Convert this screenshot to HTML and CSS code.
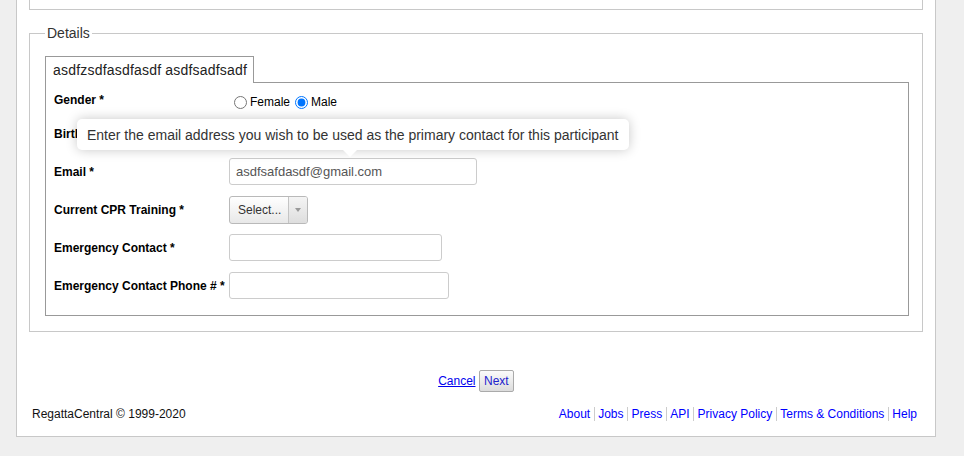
FILE: index.html
```html
<!DOCTYPE html>
<html>
<head>
<meta charset="utf-8">
<title>Details</title>
<link rel="stylesheet" href="styles.css">
</head>
<body>
<div class="page">
  <div class="prev-section"></div>

  <fieldset class="details">
    <legend>Details</legend>
    <div class="tabs">
      <div class="tab">asdfzsdfasdfasdf asdfsadfsadf</div>
      <div class="tab-filler"></div>
    </div>
    <div class="panel">
      <div class="row row-gender">
        <div class="label">Gender *</div>
        <div class="value radios">
          <input type="radio" name="g" id="gf"><label for="gf">Female</label>
          <input type="radio" name="g" id="gm" checked><label for="gm">Male</label>
        </div>
      </div>
      <div class="row">
        <div class="label">Birthdate *</div>
        <div class="value"><input class="text w-birth" type="text"></div>
      </div>
      <div class="row">
        <div class="label">Email *</div>
        <div class="value anchor">
          <input class="text w-email" type="text" value="asdfsafdasdf@gmail.com">
          <div class="tooltip">Enter the email address you wish to be used as the primary contact for this participant<span class="tip-arrow"></span></div>
        </div>
      </div>
      <div class="row row-select">
        <div class="label">Current CPR Training *</div>
        <div class="value">
          <div class="select"><span class="select-text">Select...</span><span class="select-btn"><span class="caret"></span></span></div>
        </div>
      </div>
      <div class="row">
        <div class="label">Emergency Contact *</div>
        <div class="value"><input class="text w-ec" type="text"></div>
      </div>
      <div class="row last">
        <div class="label">Emergency Contact Phone # *</div>
        <div class="value"><input class="text w-phone" type="text"></div>
      </div>
    </div>
  </fieldset>

  <div class="actions">
    <a href="#" class="cancel">Cancel</a> <button class="next">Next</button>
  </div>

  <div class="footer">
    <div class="copy">RegattaCentral © 1999-2020</div>
    <div class="links">
      <a href="#">About</a><a href="#">Jobs</a><a href="#">Press</a><a href="#">API</a><a href="#">Privacy Policy</a><a href="#">Terms &amp; Conditions</a><a href="#">Help</a>
    </div>
  </div>
</div>
</body>
</html>
```

FILE: styles.css
```css
html, body {
  margin: 0;
  padding: 0;
}
body {
  background: #efefef;
  font-family: Arial, "Liberation Sans", Helvetica, sans-serif;
  font-size: 12px;
  color: #000;
}
.page {
  box-sizing: border-box;
  width: 920px;
  margin-left: 16px;
  background: #fff;
  border: 1px solid #c8c8c8;
  border-top: none;
  padding-bottom: 14px;
}
.prev-section {
  box-sizing: border-box;
  height: 10px;
  margin: 0 12px;
  border: 1px solid #c8c8c8;
  border-top: none;
}
.details {
  margin: 15px 12px 0;
  padding: 15px 13px 15px 15px;
  border: 1px solid #c8c8c8;
  min-width: 0;
}
.details legend {
  padding: 0 2px;
  font-size: 14px;
  line-height: 16px;
  color: #333;
}
.tabs {
  display: flex;
}
.tab {
  box-sizing: border-box;
  height: 27px;
  border: 1px solid #999;
  border-bottom: none;
  padding: 0 6px 0 7px;
  font-size: 14px;
  letter-spacing: 0.2px;
  line-height: 26px;
  color: #222;
  background: #fff;
}
.tab-filler {
  flex: 1;
  box-sizing: border-box;
  height: 27px;
  border-bottom: 1px solid #999;
}
.panel {
  border: 1px solid #999;
  border-top: none;
  padding: 7px 0 16px 8px;
}
.row {
  display: grid;
  grid-template-columns: 175px auto;
  align-items: center;
  min-height: 27px;
  margin-bottom: 11px;
}
.row.last {
  margin-bottom: 0;
}
.row-select {
  margin-bottom: 10px;
}
.row-gender {
  min-height: 20px;
  height: 20px;
  margin-bottom: 10px;
}
.label {
  font-weight: bold;
  font-size: 12px;
}
.value {
  display: flex;
  align-items: center;
}
.radios input {
  margin: 4px 3px 0 5px;
  width: 13px;
  height: 13px;
}
.radios label {
  font-size: 12px;
  margin-top: 4px;
}
.text {
  box-sizing: border-box;
  height: 27px;
  border: 1px solid #ccc;
  border-radius: 3px;
  padding: 0 6px;
  font-family: Arial, "Liberation Sans", sans-serif;
  font-size: 13px;
  color: #555;
  margin: 0;
}
.w-birth { width: 130px; }
.w-email { width: 248px; }
.w-ec { width: 213px; }
.w-phone { width: 220px; }

.anchor {
  position: relative;
}
.tooltip {
  position: absolute;
  left: -152px;
  top: -39px;
  box-sizing: border-box;
  width: 552px;
  height: 31px;
  padding: 0 10px;
  background: #fff;
  border-radius: 5px;
  box-shadow: 0 0 12px rgba(0, 0, 0, 0.22);
  font-size: 14px;
  line-height: 32px;
  color: #333;
  white-space: nowrap;
  z-index: 5;
}
.tip-arrow {
  position: absolute;
  left: 266px;
  top: 31px;
  width: 0;
  height: 0;
  border-left: 7px solid transparent;
  border-right: 7px solid transparent;
  border-top: 7px solid #fff;
}

.select {
  box-sizing: border-box;
  display: flex;
  width: 79px;
  height: 28px;
  border: 1px solid #b9b9b9;
  border-radius: 3px;
  background: linear-gradient(#fff, #e8e8e8);
}
.select-text {
  flex: 1;
  padding-left: 8px;
  font-size: 12px;
  line-height: 26px;
  color: #333;
}
.select-btn {
  width: 18px;
  border-left: 1px solid #c4c4c4;
  display: flex;
  align-items: center;
  justify-content: center;
  background: linear-gradient(#f4f4f4, #dedede);
  border-radius: 0 2px 2px 0;
}
.caret {
  width: 0;
  height: 0;
  border-left: 3px solid transparent;
  border-right: 3px solid transparent;
  border-top: 4px solid #999;
}

.actions {
  margin-top: 38px;
  text-align: center;
  height: 22px;
  line-height: 22px;
}
.cancel {
  color: #00e;
  font-size: 12px;
  text-decoration: underline;
}
.next {
  box-sizing: border-box;
  height: 22px;
  width: 35px;
  padding: 0;
  margin: 0;
  vertical-align: top;
  border: 1px solid #aaa;
  border-radius: 2px;
  background: linear-gradient(#fbfbfb, #dcdcdc);
  font-family: Arial, "Liberation Sans", sans-serif;
  font-size: 12px;
  color: #22c;
}
.footer {
  display: flex;
  justify-content: space-between;
  align-items: center;
  margin-top: 14px;
  padding: 0 18px 0 15px;
  line-height: 16px;
  font-size: 12px;
}
.copy {
  color: #111;
}
.links a {
  color: #00f;
  text-decoration: none;
  padding: 0 3.5px;
  border-left: 1px solid #ccc;
}
.links a:first-child {
  border-left: none;
}
.links a:last-child {
  padding-right: 0;
}
```
